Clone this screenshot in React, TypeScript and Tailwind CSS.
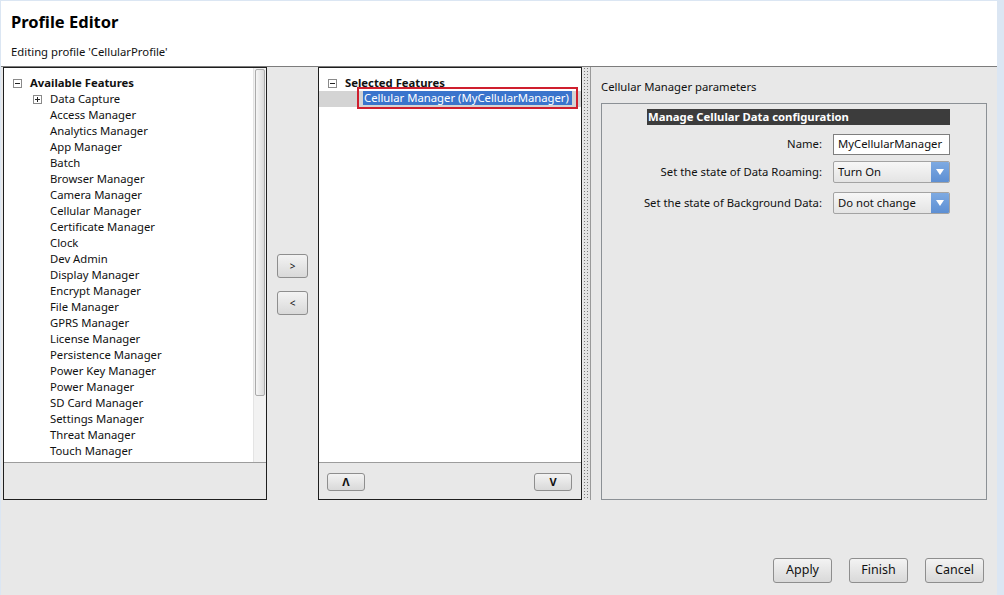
import React from "react";

const features = [
  "Access Manager",
  "Analytics Manager",
  "App Manager",
  "Batch",
  "Browser Manager",
  "Camera Manager",
  "Cellular Manager",
  "Certificate Manager",
  "Clock",
  "Dev Admin",
  "Display Manager",
  "Encrypt Manager",
  "File Manager",
  "GPRS Manager",
  "License Manager",
  "Persistence Manager",
  "Power Key Manager",
  "Power Manager",
  "SD Card Manager",
  "Settings Manager",
  "Threat Manager",
  "Touch Manager",
];

function TreeBox({ plus }: { plus?: boolean }) {
  return (
    <svg width="9" height="9" viewBox="0 0 9 9" className="shrink-0">
      <rect x="0.5" y="0.5" width="8" height="8" fill="white" stroke="#8a8a8a" />
      <line x1="2" y1="4.5" x2="7" y2="4.5" stroke="#222" />
      {plus && <line x1="4.5" y1="2" x2="4.5" y2="7" stroke="#222" />}
    </svg>
  );
}

function SmallButton({ children, className }: { children: React.ReactNode; className?: string }) {
  return (
    <div
      className={
        "flex items-center justify-center rounded-[3px] border border-[#8e8e8e] bg-gradient-to-b from-[#f3f3f3] to-[#d9d9d9] text-[#111] " +
        (className ?? "")
      }
    >
      {children}
    </div>
  );
}

function Select({ value }: { value: string }) {
  return (
    <div className="flex h-[22px] items-stretch rounded-[2px] border border-[#a3a3a3] bg-gradient-to-b from-[#f7f7f7] to-[#e4e4e4]">
      <div className="flex flex-1 items-center whitespace-nowrap pl-[4px] text-[#111]">{value}</div>
      <div className="flex w-[18px] items-center justify-center rounded-r-[1px] bg-gradient-to-b from-[#7eaae2] to-[#5d8fd3]">
        <svg width="8" height="6" viewBox="0 0 8 6">
          <polygon points="0,0 8,0 4,6" fill="white" />
        </svg>
      </div>
    </div>
  );
}

export default function App() {
  return (
    <div className="h-[595px] w-[1004px] overflow-hidden bg-[#dbe6f3] pl-[1px] pr-[7px] pt-[1px] font-['Segoe_UI','Noto_Sans',sans-serif] text-[11.3px] text-[#111]">
      <div className="flex h-full flex-col bg-[#e8e8e8]">
        {/* Header */}
        <div className="h-[66px] border-b border-[#7c7c7c] bg-white pl-[10px]">
          <div className="pt-[10px] text-[16.5px] font-bold leading-[22px] text-black">Profile Editor</div>
          <div className="pt-[11px] leading-[16px] text-[#111]">Editing profile 'CellularProfile'</div>
        </div>

        {/* Panels */}
        <div className="flex h-[433px] pl-[2px]">
          {/* Available features */}
          <div className="flex h-[433px] w-[264px] flex-col border border-[#1e1e1e] bg-[#e8e8e8]">
            <div className="flex h-[395px] border-b border-[#9c9c9c] bg-white">
              <div className="flex-1 pt-[7px]">
                <div className="flex h-[16px] items-center pl-[9px]">
                  <TreeBox />
                  <span className="ml-[8px] font-bold">Available Features</span>
                </div>
                <div className="flex h-[16px] items-center pl-[29px]">
                  <TreeBox plus />
                  <span className="ml-[8px]">Data Capture</span>
                </div>
                {features.map((f) => (
                  <div key={f} className="flex h-[16px] items-center whitespace-nowrap pl-[46px]">
                    {f}
                  </div>
                ))}
              </div>
              <div className="w-[13px] border-l border-[#e4e4e4] bg-[#f2f2f2] pt-[1px]">
                <div className="mx-[1px] h-[327px] rounded-[2px] border border-[#ababab] bg-gradient-to-r from-[#f6f6f6] to-[#dadada]" />
              </div>
            </div>
          </div>

          {/* Move buttons */}
          <div className="flex w-[51px] flex-col items-center pt-[187px]">
            <SmallButton className="h-[24px] w-[31px] text-[10px]">&gt;</SmallButton>
            <SmallButton className="mt-[13px] h-[24px] w-[31px] text-[10px]">&lt;</SmallButton>
          </div>

          {/* Selected features */}
          <div className="flex h-[433px] w-[264px] flex-col border border-[#1e1e1e] bg-[#e8e8e8]">
            <div className="h-[395px] border-b border-[#9c9c9c] bg-white pt-[7px]">
              <div className="flex h-[16px] items-center pl-[9px]">
                <TreeBox />
                <span className="ml-[8px] font-bold">Selected Features</span>
              </div>
              <div className="flex h-[16px] items-center bg-[#d4d4d4] pl-[38px]">
                <div className="-mb-[2px] -mt-[4px] flex h-[22px] w-[221px] items-center border-2 border-[#cf1f2e] pl-[4px]">
                  <span className="flex h-[14px] w-[209px] items-center whitespace-nowrap bg-[#3a74cc] pl-[1px] text-white">
                    Cellular Manager (MyCellularManager)
                  </span>
                </div>
              </div>
            </div>
            <div className="flex justify-between pl-[8px] pr-[9px] pt-[10px]">
              <SmallButton className="h-[18px] w-[38px] text-[11px] font-bold">Λ</SmallButton>
              <SmallButton className="h-[18px] w-[38px] text-[11px] font-bold">V</SmallButton>
            </div>
          </div>

          {/* Sash */}
          <div className="ml-[1px] w-[7px] bg-[#e4e4e4] bg-[radial-gradient(circle,#7a7a7a_0.7px,transparent_0.8px)] bg-[length:3px_3px]" />
          <div className="w-px bg-[#9a9a9a]" />

          {/* Parameters */}
          <div className="flex flex-1 flex-col px-[10px] pt-[12px]">
            <div className="h-[16px] leading-[16px]">Cellular Manager parameters</div>
            <div className="mt-[8px] flex-1 border border-[#8b9095]">
              <div className="ml-[45px] mt-[5px] w-[303px]">
                <div className="flex h-[16px] items-center bg-[#3c3c3c] pl-[1px] font-bold text-white">
                  Manage Cellular Data configuration
                </div>
                <div className="mt-[9px] grid grid-cols-[175px_117px] items-center gap-x-[11px]">
                  <div className="flex justify-end whitespace-nowrap">Name:</div>
                  <div className="flex h-[21px] items-center whitespace-nowrap border border-[#7f7f7f] bg-white pl-[4px]">
                    MyCellularManager
                  </div>
                </div>
                <div className="mt-[6px] grid grid-cols-[175px_117px] items-center gap-x-[11px]">
                  <div className="flex justify-end whitespace-nowrap">Set the state of Data Roaming:</div>
                  <Select value="Turn On" />
                </div>
                <div className="mt-[9px] grid grid-cols-[175px_117px] items-center gap-x-[11px]">
                  <div className="flex justify-end whitespace-nowrap">Set the state of Background Data:</div>
                  <Select value="Do not change" />
                </div>
              </div>
            </div>
          </div>
        </div>

        {/* Bottom buttons */}
        <div className="mt-[58px] flex justify-end gap-[17px] pr-[13px]">
          <SmallButton className="h-[25px] w-[59px] text-[12.5px]">Apply</SmallButton>
          <SmallButton className="h-[25px] w-[59px] text-[12.5px]">Finish</SmallButton>
          <SmallButton className="h-[25px] w-[59px] text-[12.5px]">Cancel</SmallButton>
        </div>
      </div>
    </div>
  );
}
